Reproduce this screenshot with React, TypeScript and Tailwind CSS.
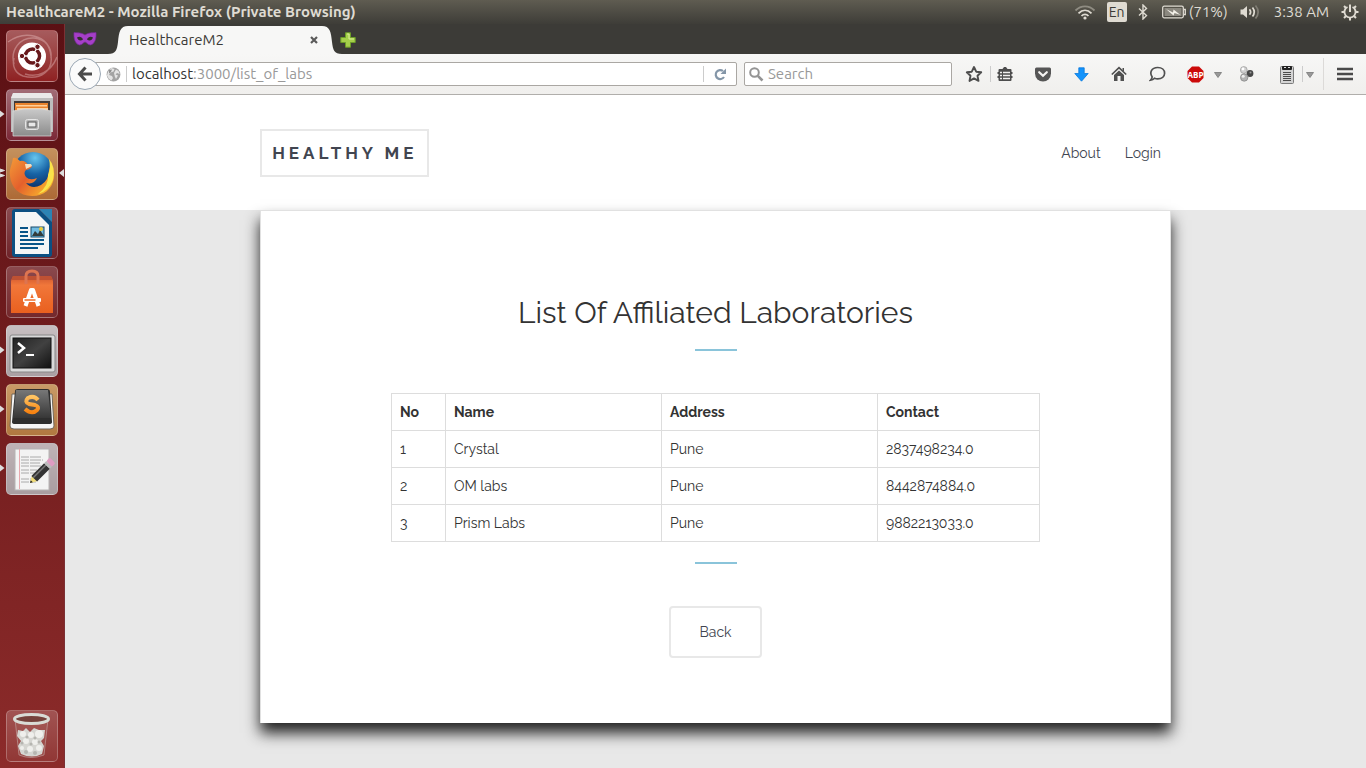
import type { ReactNode } from "react";

const labs = [
  { no: 1, name: "Crystal", address: "Pune", contact: "2837498234.0" },
  { no: 2, name: "OM labs", address: "Pune", contact: "8442874884.0" },
  { no: 3, name: "Prism Labs", address: "Pune", contact: "9882213033.0" },
];

function WifiIcon() {
  return (
    <svg width="22" height="16" viewBox="0 0 22 16" fill="none" strokeWidth="1.8">
      <path d="M1.5 6.5C7 1 15 1 20.500 6.500" stroke="#8f8c82" />
      <path d="M4.500 9.300C8.500 5.300 13.500 5.300 17.500 9.300" stroke="#dfdbd2" />
      <path d="M7.500 12C9.500 9.800 12.500 9.800 14.500 12" stroke="#dfdbd2" />
      <circle cx="11" cy="14" r="1.600" fill="#dfdbd2" />
    </svg>
  );
}

function BluetoothIcon() {
  return (
    <svg width="10" height="16" viewBox="0 0 10 16" fill="none" stroke="#dfdbd2" strokeWidth="1.4">
      <path d="M1 4.500L8.500 11.500L5 15V1L8.500 4.500L1 11.500" />
    </svg>
  );
}

function BatteryIcon() {
  return (
    <svg width="24" height="14" viewBox="0 0 24 14">
      <rect x="0.700" y="1.200" width="20.600" height="11.600" rx="1.500" fill="none" stroke="#dfdbd2" strokeWidth="1.300" />
      <rect x="2.500" y="3" width="17" height="8" fill="#8b887f" />
      <path d="M4 4L11 7.500L11.500 4.500L18.500 10L12.500 8L11.500 10.500Z" fill="#f3f0e8" />
      <path d="M22 4.500H23.300V9.500H22" fill="none" stroke="#dfdbd2" strokeWidth="1.300" />
    </svg>
  );
}

function VolumeIcon() {
  return (
    <svg width="20" height="16" viewBox="0 0 20 16" fill="none" strokeWidth="1.700">
      <path d="M0.500 5.500H3L7 2V14L3 10.500H0.500Z" fill="#dfdbd2" />
      <path d="M9.500 5.200Q11.800 8 9.500 10.800M12.500 3.500Q16 8 12.500 12.500" stroke="#dfdbd2" />
      <path d="M15.500 1.500Q20.800 8 15.500 14.500" stroke="#7f7c73" />
    </svg>
  );
}

function PowerGearIcon() {
  return (
    <svg width="18" height="18" viewBox="0 0 18 18" fill="none" stroke="#dfdbd2">
      <path d="M6.500 4A5.600 5.600 0 1 0 11.500 4" strokeWidth="1.900" />
      <path d="M9 1.500V9" strokeWidth="2" />
      <path d="M14.500 9H17.500M0.500 9H3.500M9 14.500V17.500M3 3L5 5M15 3L13 5M3 15L5 13M15 15L13 13" strokeWidth="2" />
    </svg>
  );
}

function MaskIcon() {
  return (
    <svg width="24" height="16" viewBox="0 0 24 16">
      <path d="M1 1.500C5 2 9 1.500 12 4C15 1.500 19 2 23 1.500C23.500 7 22 13 17.500 14C14.500 14 13.500 11 12 11C10.500 11 9.500 14 6.500 14C2 13 0.500 7 1 1.500Z" fill="#a53fc8" stroke="#7a2a99" strokeWidth="0.700" />
      <path d="M4 6.500C6 5 9 5.500 10 8.500C8 10 5 10 4 6.500ZM20 6.500C18 5 15 5.500 14 8.500C16 10 19 10 20 6.500Z" fill="#33302f" />
    </svg>
  );
}

function GlobeIcon() {
  return (
    <svg width="15" height="15" viewBox="0 0 15 15">
      <circle cx="7.500" cy="7.500" r="6.900" fill="#a3a3a3" />
      <path d="M5 1L8.500 2L7.500 4.500L4.500 5.500L3 8L6 9L7 11L5.500 13.500Q2 12 1 8.500L2 5ZM10 2.500L12.500 4L13.700 7L11 6L9.500 7.500L12 8.500L10 12L8.800 9.500L8 6Z" fill="#e4e4e4" />
      <path d="M3 3L6 2.500L5 5L3 6.500Z" fill="#8f8f8f" />
    </svg>
  );
}

function ReloadIcon() {
  return (
    <svg width="13" height="13" viewBox="0 0 13 13">
      <path d="M10 9A4.500 4.500 0 1 1 9 3" fill="none" stroke="#8496a8" strokeWidth="2.200" />
      <path d="M12 0.500V6H6.500Z" fill="#8496a8" />
    </svg>
  );
}

function SearchIcon() {
  return (
    <svg width="15" height="15" viewBox="0 0 15 15" fill="none" stroke="#949494">
      <circle cx="5.500" cy="5.500" r="4.300" strokeWidth="2" />
      <path d="M8.800 8.800L13.500 13.500" strokeWidth="2.600" />
    </svg>
  );
}

function StarIcon() {
  return (
    <svg width="18" height="18" viewBox="0 0 18 18">
      <path d="M9 2L11.200 6.700L16.200 7.300L12.500 10.800L13.500 15.900L9 13.400L4.500 15.900L5.500 10.800L1.800 7.300L6.800 6.700Z" fill="none" stroke="#4d4d4d" strokeWidth="1.900" strokeLinejoin="round" />
    </svg>
  );
}

function ClipboardIcon() {
  return (
    <svg width="16" height="16" viewBox="0 0 16 16">
      <path d="M2.500 3H5.500L7 1H9L10.500 3H13.500Q14.500 3 14.500 4V6H15.500V8H14.500V10H15.500V12H14.500V14Q14.500 15 13.500 15H2.500Q1.500 15 1.500 14V12H0.500V10H1.500V8H0.500V6H1.500V4Q1.500 3 2.500 3Z" fill="#4d4d4d" />
      <path d="M3 6.500H5M6 6.500H13M3 9.500H5M6 9.500H13M3 12.500H5M6 12.500H13" stroke="#f2f1f0" strokeWidth="1.700" />
    </svg>
  );
}

function PocketIcon() {
  return (
    <svg width="16" height="15" viewBox="0 0 16 15">
      <path d="M1.500 0.500H14.500Q16 0.500 16 2V6.500A8 8 0 0 1 0 6.500V2Q0 0.500 1.500 0.500Z" fill="#565656" />
      <path d="M4.200 5.200L8 8.800L11.800 5.200" fill="none" stroke="#f5f4f3" strokeWidth="2.200" strokeLinecap="round" />
    </svg>
  );
}

function DownloadIcon() {
  return (
    <svg width="15" height="15" viewBox="0 0 15 15">
      <path d="M4.800 0.800H10.200V6.500H14.200L7.500 14.200L0.800 6.500H4.800Z" fill="#1493fb" stroke="#0878dc" strokeWidth="0.800" />
    </svg>
  );
}

function HomeIcon() {
  return (
    <svg width="16" height="16" viewBox="0 0 16 16">
      <path d="M0.800 8.500L8 1.700L15.200 8.500" fill="none" stroke="#505050" strokeWidth="1.700" />
      <path d="M3 9L8 4.500L13 9V15H9.500V10H6.500V15H3Z" fill="#505050" />
      <path d="M11.500 2H13V5H11.500Z" fill="#505050" />
    </svg>
  );
}

function ChatIcon() {
  return (
    <svg width="17" height="16" viewBox="0 0 17 16">
      <path d="M8.700 1.500C13 1.500 15.600 4 15.600 7.200C15.600 10.500 12.700 12.800 8.700 12.800C7.500 12.800 6.500 12.600 5.500 12.200Q4 14 1.500 14.200Q3 12.500 3.200 10.900C0.300 7 2.300 1.500 8.700 1.500Z" fill="none" stroke="#505050" strokeWidth="1.700" />
    </svg>
  );
}

function AdblockIcon() {
  return (
    <svg width="17" height="17" viewBox="0 0 17 17">
      <path d="M5 0.500H12L16.500 5V12L12 16.500H5L0.500 12V5Z" fill="#cc0a0a" />
      <text x="8.500" y="11.500" textAnchor="middle" fill="#fff" fontFamily="Open Sans, sans-serif" fontWeight="700" fontSize="8">ABP</text>
    </svg>
  );
}

function CaretIcon() {
  return (
    <svg width="8" height="8" viewBox="0 0 8 8">
      <path d="M0.500 2.500H7.500L4 7.500Z" fill="#999" stroke="#777" strokeWidth="0.800" />
    </svg>
  );
}

function SpheresIcon() {
  return (
    <svg width="16" height="16" viewBox="0 0 16 16">
      <circle cx="11" cy="7.500" r="3.400" fill="#484848" />
      <circle cx="4.800" cy="4" r="3.400" fill="#d0d0d0" stroke="#9a9a9a" strokeWidth="0.700" />
      <circle cx="5.200" cy="11.500" r="3.700" fill="#b3b3b3" stroke="#808080" strokeWidth="0.700" />
      <circle cx="4" cy="3" r="1.400" fill="#fff" />
      <circle cx="4.200" cy="10.300" r="1.500" fill="#eee" />
      <circle cx="11.500" cy="6.500" r="1" fill="#999" />
    </svg>
  );
}

function NotepadIcon() {
  return (
    <svg width="14" height="19" viewBox="0 0 14 19">
      <rect x="0.500" y="1.500" width="13" height="17" rx="1" fill="#d4d4d4" stroke="#7b7b7b" />
      <rect x="2" y="1" width="10" height="4" rx="1" fill="#222" />
      <path d="M4 2.500H6M8 2.500H10" stroke="#ddd" />
      <path d="M3 7.500H11M3 9.500H11M3 11.500H11M3 13.500H11M3 15.500H11" stroke="#4a4a4a" />
    </svg>
  );
}

function UbuntuIcon() {
  return (
    <svg width="52" height="52" viewBox="0 0 52 52" fill="none">
      <path d="M8 34C4 20 14 7 28 8C40 9 46 18 45 28M2 12C18 0 43 4 45 26C47 40 35 51 17 46C9 43 6 36 8 28M51 27C45 42 32 48 19 44" stroke="#edc8c8" strokeOpacity=".4" strokeWidth="1.500" />
      <circle cx="26" cy="26.500" r="14" fill="#fff" />
      <circle cx="26.500" cy="26" r="7" stroke="#68191c" strokeWidth="3.600" />
      <path d="M26.500 26L15 26M26.500 26L32 16M26.500 26L32 36" stroke="#fff" strokeWidth="1.300" />
      <g fill="#68191c" stroke="#fff" strokeWidth="1">
        <circle cx="16" cy="26" r="2.700" />
        <circle cx="31.500" cy="16.800" r="2.700" />
        <circle cx="31.500" cy="35.200" r="2.700" />
      </g>
      <circle cx="26.500" cy="26" r="5" fill="#fff" />
    </svg>
  );
}

function FilesIcon() {
  return (
    <svg width="52" height="52" viewBox="0 0 52 52">
      <defs>
        <linearGradient id="cabinet" x2="0" y2="1"><stop stopColor="#c9c9c9" /><stop offset="1" stopColor="#8b8b8b" /></linearGradient>
      </defs>
      <path d="M7 4H45L47 9V43H5V9Z" fill="#bdbdbd" />
      <path d="M7 4H45L47 9H5Z" fill="#e9e9e9" />
      <rect x="8" y="12" width="36" height="10" fill="#423a36" />
      <rect x="9" y="14" width="33" height="9" fill="#e9832c" />
      <path d="M10 16H41V17.500H10ZM11 19H42V21H11Z" fill="#ffd09a" />
      <path d="M7 22L18 20H36L45 22V47H7Z" fill="url(#cabinet)" stroke="#dedede" strokeWidth=".7" />
      <rect x="19.500" y="30.500" width="13" height="10" rx="2" fill="#b5b5b5" stroke="#e5e5e5" />
      <rect x="22" y="33" width="8" height="5" fill="#e8e8e8" stroke="#555" />
    </svg>
  );
}

function FirefoxIcon() {
  return (
    <svg width="52" height="52" viewBox="0 0 52 52">
      <defs>
        <radialGradient id="earth" cx=".55" cy=".15" r=".8"><stop stopColor="#65c5ef" /><stop offset=".5" stopColor="#1763a5" /><stop offset="1" stopColor="#0c2c62" /></radialGradient>
        <linearGradient id="fox" x1="0" x2="1" y2=".7"><stop stopColor="#f39b38" /><stop offset=".5" stopColor="#e4602c" /><stop offset="1" stopColor="#f9b52c" /></linearGradient>
      </defs>
      <circle cx="27" cy="24" r="20" fill="url(#earth)" />
      <path d="M7 10Q10 9 14 13Q19 12 22 17L26 18Q25 21 20 22Q17 25 20 29Q24 33 31 30Q28 37 20 35Q26 42 35 37Q43 32 43 22L45 15Q49 22 48 30C46 41 38 48 26 48C13 48 5 39 4 28C3 21 6 17 7 10Z" fill="url(#fox)" />
      <path d="M43 11Q50 19 47 32Q43 43 32 46Q43 38 42 27Q45 20 43 11Z" fill="#f9e34a" />
      <path d="M19 16L25 16L26 18L20 21Z" fill="#f5dfbf" />
    </svg>
  );
}

function WriterIcon() {
  return (
    <svg width="52" height="52" viewBox="0 0 52 52">
      <path d="M9 2H33L46 15V47Q46 50 43 50H9Q6 50 6 47V5Q6 2 9 2Z" fill="#0b4f82" />
      <path d="M33 2H46V15Z" fill="#2b83b4" />
      <path d="M9 5H30L43 18V47H9Z" fill="#f3f5f6" />
      <path d="M14 21H22M14 25H22M14 29H22M14 33H38M14 37H38M14 41H32" stroke="#075488" strokeWidth="2" />
      <rect x="25" y="20" width="13" height="10" fill="#71bce2" stroke="#174b6b" />
      <path d="M26 29L29 24L32 27L34 23L38 29Z" fill="#333c3c" />
      <circle cx="35" cy="22" r="2" fill="#edcc37" />
    </svg>
  );
}

function SoftwareIcon() {
  return (
    <svg width="52" height="52" viewBox="0 0 52 52">
      <defs><linearGradient id="bag" x2="0" y2="1"><stop stopColor="#ce5730" /><stop offset=".25" stopColor="#f1773a" /><stop offset="1" stopColor="#e9601f" /></linearGradient></defs>
      <path d="M7 10H45L47 15V47H5V15Z" fill="url(#bag)" />
      <path d="M7 10H45L47 14H5Z" fill="#be5133" />
      <path d="M20 18V10Q20 5 26 5Q32 5 32 10V18" fill="none" stroke="#dd7450" strokeWidth="3" />
      <path d="M19.500 40L25 24H27L32.500 40" fill="none" stroke="#fff" strokeWidth="4" strokeLinejoin="round" />
      <rect x="17" y="32" width="18" height="4" rx="1" fill="#fff" />
      <path d="M18.500 34H29.500" stroke="#ed6d2b" strokeWidth="1.500" />
    </svg>
  );
}

function TerminalIcon() {
  return (
    <svg width="52" height="52" viewBox="0 0 52 52">
      <defs><linearGradient id="screen" x2="1" y2="1"><stop stopColor="#222" /><stop offset=".5" stopColor="#414141" /><stop offset="1" stopColor="#111" /></linearGradient></defs>
      <rect x="4" y="10" width="45" height="37" rx="2" fill="#d9d9d9" stroke="#888" />
      <rect x="7" y="13" width="38" height="30" fill="url(#screen)" stroke="#111" />
      <path d="M12 18L18 23L12 28" fill="none" stroke="#fff" strokeWidth="2.500" />
      <path d="M20 30H28" stroke="#fff" strokeWidth="2" />
    </svg>
  );
}

function SublimeIcon() {
  return (
    <svg width="52" height="52" viewBox="0 0 52 52">
      <defs>
        <linearGradient id="key" x2="0" y2="1"><stop stopColor="#777" /><stop offset="1" stopColor="#373737" /></linearGradient>
        <linearGradient id="glow" x2="0" y2="1"><stop stopColor="#ffc361" /><stop offset="1" stopColor="#f78312" /></linearGradient>
      </defs>
      <path d="M6 10L4 42Q4 45 8 45H44Q48 45 48 42L46 10Z" fill="#f6f6f6" stroke="#71675a" />
      <path d="M9 7Q9 5 12 5H41Q44 5 44 8L46 38Q46 40 43 40H9Q6 40 6 38Z" fill="#2e2e2e" />
      <path d="M10 6H42L45 34H7Z" fill="url(#key)" />
      <path d="M32 16Q28 11 22 14Q18 18 23 20L29 21Q34 23 31 26Q26 31 19 25" fill="none" stroke="url(#glow)" strokeWidth="4" />
    </svg>
  );
}

function EditorIcon() {
  return (
    <svg width="52" height="52" viewBox="0 0 52 52">
      <rect x="9" y="6" width="34" height="41" fill="#f3f3f3" stroke="#b6b3b3" />
      <path d="M13.500 6V46" stroke="#e8a9ae" />
      <path d="M15 14H35M15 17H37M15 20H34M15 23H36M15 27H31M15 30H33M15 36H28M15 39H30" stroke="#aaa" strokeWidth="1" strokeDasharray="8 1 11 1" />
      <g transform="translate(24 40) rotate(-45)">
        <path d="M0 0L7 -4V4Z" fill="#f0dc79" />
        <rect x="6" y="-4" width="18" height="8" fill="#333" />
        <path d="M6 -1.500H24" stroke="#777" strokeWidth="1.500" />
        <rect x="24" y="-4" width="3" height="8" fill="#bbb" />
        <rect x="27" y="-4" width="5" height="8" rx="1.500" fill="#df9cc2" />
        <path d="M0 0L2.500 -1.500V1.500Z" fill="#222" />
      </g>
    </svg>
  );
}

function TrashIcon() {
  return (
    <svg width="52" height="52" viewBox="0 0 52 52">
      <path d="M9 9L13 45Q25 50 38 45L42 9" fill="#a8605a" fillOpacity=".4" stroke="#c4aaa7" strokeOpacity=".6" />
      <ellipse cx="25.500" cy="9" rx="17" ry="4.500" fill="#75413b" stroke="#d9dbd5" strokeWidth="3" />
      <path d="M12 20L17 21L20 18L24 22L28 18L33 20L39 20L38 28L35 31L38 36L36 44Q26 49 15 44L12 36L15 31L11 26Z" fill="#d5d5d1" />
      <g fill="#efefec">
        <circle cx="17" cy="24" r="3" /><circle cx="25" cy="25" r="3" /><circle cx="33" cy="24" r="4" />
        <circle cx="20" cy="31" r="3" /><circle cx="29" cy="32" r="3" /><circle cx="16" cy="38" r="2" />
        <circle cx="24" cy="39" r="3" /><circle cx="33" cy="38" r="3" />
      </g>
      <g fill="#b5b5b0">
        <circle cx="21" cy="27" r="1.500" /><circle cx="29" cy="28" r="1.500" /><circle cx="16" cy="33" r="1.500" />
        <circle cx="25" cy="34" r="1.500" /><circle cx="33" cy="32" r="1.500" /><circle cx="20" cy="42" r="2" /><circle cx="29" cy="43" r="2" />
      </g>
    </svg>
  );
}

type Running = "none" | "one" | "focused";

function LauncherItem({ label, tone, running = "none", children }: { label: string; tone: string; running?: Running; children: ReactNode }) {
  return (
    <div className="relative w-full px-1.5">
      <button aria-label={label} className={`block size-[52px] overflow-hidden rounded-[5px] border border-white/25 ${tone}`}>
        <span className="-m-px block">{children}</span>
      </button>
      {running === "one" && (
        <svg className="absolute top-5 left-0" width="5" height="10" viewBox="0 0 5 10"><path d="M0 1.500L4.500 5L0 8.500Z" fill="#ddd" /></svg>
      )}
      {running === "focused" && (
        <>
          <svg className="absolute top-5 left-0" width="5" height="10" viewBox="0 0 5 10"><path d="M0 1L4.500 2.500L0 4ZM0 6L4.500 7.500L0 9Z" fill="#ddd" stroke="#ddd" /></svg>
          <svg className="absolute top-5 right-0" width="5" height="10" viewBox="0 0 5 10"><path d="M5 1L0 5L5 9Z" fill="#ddd" /></svg>
        </>
      )}
    </div>
  );
}

function SystemBar() {
  return (
    <header className="flex h-6 shrink-0 items-center justify-between bg-linear-to-b from-[#5f5c51] to-[#3e3d38] pr-[7px] pl-1.5 text-[#dfdbd2]">
      <h1 className="text-[15px] leading-6 font-bold whitespace-nowrap">HealthcareM2 - Mozilla Firefox (Private Browsing)</h1>
      <div className="flex items-center text-[15px] leading-6 whitespace-nowrap">
        <WifiIcon />
        <span className="mx-[11px] flex size-5 items-center justify-center rounded-xs bg-[#dfdbd2] text-[14px] text-[#3c3b37]">En</span>
        <BluetoothIcon />
        <span className="ml-3.5 flex items-center gap-[3px]"><BatteryIcon />(71%)</span>
        <span className="mr-3.5 ml-3"><VolumeIcon /></span>
        <time>3:38 AM</time>
        <span className="ml-3"><PowerGearIcon /></span>
      </div>
    </header>
  );
}

function Launcher() {
  return (
    <nav aria-label="Launcher" className="flex w-[65px] shrink-0 flex-col items-start justify-between border-r border-[#7b3034] bg-linear-to-b from-[#5b1014] to-[#8c2b2a] pt-1.5 pb-1.5">
      <div className="flex w-full flex-col gap-[7px]">
        <LauncherItem label="Dash" tone="bg-linear-to-b from-[#a65b5d] to-[#8f2022]"><UbuntuIcon /></LauncherItem>
        <LauncherItem label="Files" tone="bg-linear-to-b from-[#a16c76] to-[#7b2737]" running="one"><FilesIcon /></LauncherItem>
        <LauncherItem label="Firefox" tone="bg-linear-to-b from-[#c4915d] to-[#ad6a36]" running="focused"><FirefoxIcon /></LauncherItem>
        <LauncherItem label="Writer" tone="bg-linear-to-b from-[#894b50] to-[#6f2329]"><WriterIcon /></LauncherItem>
        <LauncherItem label="Software Center" tone="bg-linear-to-b from-[#8a494d] to-[#74282c]"><SoftwareIcon /></LauncherItem>
        <LauncherItem label="Terminal" tone="bg-linear-to-b from-[#c7bfc1] to-[#aaa0a3]" running="one"><TerminalIcon /></LauncherItem>
        <LauncherItem label="Sublime Text" tone="bg-linear-to-b from-[#c99a67] to-[#b17840]" running="one"><SublimeIcon /></LauncherItem>
        <LauncherItem label="Text Editor" tone="bg-linear-to-b from-[#bfb3b6] to-[#a99da0]" running="one"><EditorIcon /></LauncherItem>
      </div>
      <LauncherItem label="Trash" tone="bg-linear-to-b from-[#a15352] to-[#913735]"><TrashIcon /></LauncherItem>
    </nav>
  );
}

function TabStrip() {
  return (
    <div className="flex h-[30px] shrink-0 items-end bg-[#3c3b37] pl-2">
      <span className="mr-[11px] flex h-[30px] items-center"><MaskIcon /></span>
      <div className="flex h-7 items-stretch">
        <svg width="20" height="28" viewBox="0 0 20 28"><path d="M0 28C8 28 9 24 10 16C11 6 12 0 20 0V28Z" fill="#f7f7f6" /></svg>
        <div className="flex w-[194px] items-center justify-between bg-[#f7f7f6] pl-px text-[15px] leading-5 text-[#3c3b37]">
          <span>HealthcareM2</span>
          <button aria-label="Close tab" className="flex size-4 items-center justify-center">
            <svg width="8" height="8" viewBox="0 0 8 8"><path d="M1 1L7 7M7 1L1 7" stroke="#5a5a5a" strokeWidth="2.200" /></svg>
          </button>
        </div>
        <svg width="20" height="28" viewBox="0 0 20 28"><path d="M0 0C8 0 9 6 10 16C11 24 12 28 20 28H0Z" fill="#f7f7f6" /></svg>
      </div>
      <button aria-label="New tab" className="flex h-7 w-3 items-center justify-center">
        <svg className="shrink-0" width="16" height="16" viewBox="0 0 16 16"><path d="M5.500 0.800H10.500V5.500H15.200V10.500H10.500V15.200H5.500V10.500H0.800V5.500H5.500Z" fill="#a5cf4a" stroke="#6c9c28" /><path d="M7 2H9V7H14" fill="none" stroke="#dced9b" /></svg>
      </button>
    </div>
  );
}

function ToolButton({ label, width = "w-[38px]", children }: { label: string; width?: string; children: ReactNode }) {
  return <button aria-label={label} className={`flex h-8 shrink-0 items-center justify-center ${width}`}>{children}</button>;
}

function Toolbar() {
  return (
    <div className="flex h-[41px] shrink-0 items-center border-b border-[#b0aeab] bg-linear-to-b from-[#f7f7f6] to-[#f0efed] pl-1 text-[15px]">
      <button aria-label="Back" className="z-10 flex size-8 shrink-0 items-center justify-center rounded-full border border-[#9aa7b4] bg-[#fbfbfb]">
        <svg width="16" height="16" viewBox="0 0 16 16" fill="none" stroke="#4a4a4a" strokeWidth="3"><path d="M8.500 1.500L2.500 8L8.500 14.500M3 8H15" /></svg>
      </button>
      <div className="-ml-3 flex h-6 min-w-0 flex-1 items-center rounded-r-xs border border-[#aaa7a3] bg-white pl-4">
        <GlobeIcon />
        <span className="mx-[5px] h-4 w-px bg-[#ccc]" />
        <a href="#url" className="min-w-0 flex-1 truncate leading-6 text-[#999]"><span className="text-[#333]">localhost</span>:3000/list_of_labs</a>
        <span className="h-4 w-px bg-[#ccc]" />
        <button aria-label="Reload" className="flex w-8 items-center justify-center"><ReloadIcon /></button>
      </div>
      <label className="ml-[7px] flex h-6 w-52 items-center gap-1 rounded-xs border border-[#aaa7a3] bg-white pl-1">
        <SearchIcon />
        <input type="search" aria-label="Search" placeholder="Search" className="min-w-0 flex-1 bg-transparent leading-6 outline-none placeholder:text-[#999]" />
      </label>
      <div className="ml-1.5 flex shrink-0 items-center">
        <ToolButton label="Bookmark" width="w-8"><StarIcon /></ToolButton>
        <span className="h-4 w-px bg-[#ccc]" />
        <ToolButton label="Bookmarks list" width="w-7"><ClipboardIcon /></ToolButton>
        <span className="w-[5px]" />
        <ToolButton label="Pocket"><PocketIcon /></ToolButton>
        <ToolButton label="Downloads"><DownloadIcon /></ToolButton>
        <ToolButton label="Home"><HomeIcon /></ToolButton>
        <ToolButton label="Chat"><ChatIcon /></ToolButton>
        <ToolButton label="Adblock Plus"><AdblockIcon /></ToolButton>
        <ToolButton label="Adblock Plus menu" width="w-2"><CaretIcon /></ToolButton>
        <ToolButton label="Extension" width="w-[50px]"><SpheresIcon /></ToolButton>
        <ToolButton label="Notes" width="w-[30px]"><NotepadIcon /></ToolButton>
        <span className="h-4 w-px bg-[#ccc]" />
        <ToolButton label="Notes menu" width="w-3.5"><CaretIcon /></ToolButton>
        <span className="ml-1.5 h-8 w-px bg-[#dcdad8]" />
        <ToolButton label="Open menu" width="w-[42px]">
          <svg width="16" height="14" viewBox="0 0 16 14"><path d="M0 2H16M0 7H16M0 12H16" stroke="#4a4a4a" strokeWidth="2.600" /></svg>
        </ToolButton>
      </div>
    </div>
  );
}

function Page() {
  return (
    <div className="flex-1 bg-[#e8e8e8] pb-11 font-[Raleway,Lato,sans-serif] text-[#333]">
      <header className="bg-white">
        <div className="mx-auto flex h-[115px] w-[70%] items-center justify-between">
          <a href="#home" className="border-2 border-[#e8e8e8] px-2.5 py-2.5 text-[17px] leading-6 font-bold tracking-[4px] text-[#414550]">HEALTHY ME</a>
          <nav className="flex gap-6 pr-2.5 text-[14px] leading-6 text-[#414550]">
            <a href="#about">About</a>
            <a href="#login">Login</a>
          </nav>
        </div>
      </header>
      <main className="mx-auto flex w-[70%] flex-col items-center border border-b-0 border-[#e1e1e1] bg-white pt-20 pb-[65px] text-[14px] leading-5 shadow-[0_10px_14px_#222]">
        <h2 className="text-[30px] leading-[44px]">List Of Affiliated Laboratories</h2>
        <hr className="mt-3.5 mb-[42px] w-[42px] border-t-2 border-[#8ac4da]" />
        <table className="w-5/7 table-fixed border-collapse text-left [font-variant-numeric:oldstyle-nums]">
          <colgroup>
            <col className="w-1/12" />
            <col className="w-4/12" />
            <col className="w-4/12" />
            <col className="w-3/12" />
          </colgroup>
          <thead>
            <tr>
              {["No", "Name", "Address", "Contact"].map((title) => (
                <th key={title} scope="col" className="border border-[#ddd] p-2 font-bold">{title}</th>
              ))}
            </tr>
          </thead>
          <tbody>
            {labs.map((lab) => (
              <tr key={lab.no}>
                <td className="border border-[#ddd] p-2">{lab.no}</td>
                <td className="border border-[#ddd] p-2">{lab.name}</td>
                <td className="border border-[#ddd] p-2">{lab.address}</td>
                <td className="border border-[#ddd] p-2">{lab.contact}</td>
              </tr>
            ))}
          </tbody>
        </table>
        <hr className="mt-5 mb-[42px] w-[42px] border-t-2 border-[#8ac4da]" />
        <button className="rounded-sm border-2 border-[#e8e8e8] px-7 py-3.5 text-[#414550]">Back</button>
      </main>
    </div>
  );
}

export default function App() {
  return (
    <div className="flex min-h-screen flex-col font-[Ubuntu,'Open_Sans',sans-serif]">
      <SystemBar />
      <div className="flex flex-1">
        <Launcher />
        <div className="flex min-w-0 flex-1 flex-col">
          <TabStrip />
          <Toolbar />
          <Page />
        </div>
      </div>
    </div>
  );
}
